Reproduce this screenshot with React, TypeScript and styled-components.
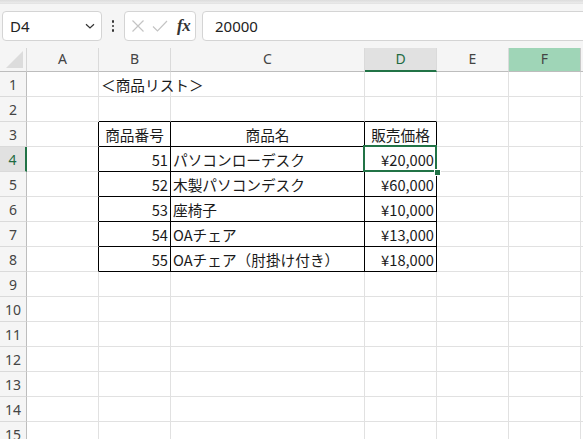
import React from 'react';
import styled, { createGlobalStyle } from 'styled-components';

const GlobalStyle = createGlobalStyle`
  html, body {
    margin: 0;
    padding: 0;
    background: #ffffff;
    overflow: hidden;
  }
  * {
    box-sizing: border-box;
  }
`;

const COLS = ['A', 'B', 'C', 'D', 'E', 'F', 'G'];
const WIDTHS = [72, 72, 194, 72, 72, 72, 72];
const ROW_HEAD = 27;
const ROW_COUNT = 15;

type CellData = { text: string; align?: 'left' | 'right' | 'center' };

const data: Record<string, CellData> = {
  B1: { text: '＜商品リスト＞' },
  B3: { text: '商品番号', align: 'center' },
  C3: { text: '商品名', align: 'center' },
  D3: { text: '販売価格', align: 'center' },
  B4: { text: '51', align: 'right' },
  C4: { text: 'パソコンローデスク' },
  D4: { text: '¥20,000', align: 'right' },
  B5: { text: '52', align: 'right' },
  C5: { text: '木製パソコンデスク' },
  D5: { text: '¥60,000', align: 'right' },
  B6: { text: '53', align: 'right' },
  C6: { text: '座椅子' },
  D6: { text: '¥10,000', align: 'right' },
  B7: { text: '54', align: 'right' },
  C7: { text: 'OAチェア' },
  D7: { text: '¥13,000', align: 'right' },
  B8: { text: '55', align: 'right' },
  C8: { text: 'OAチェア（肘掛け付き）' },
  D8: { text: '¥18,000', align: 'right' },
};

const Page = styled.div`
  width: 583px;
  height: 439px;
  display: flex;
  flex-direction: column;
  background: #f5f5f5;
  overflow: hidden;
`;

const RibbonEdge = styled.div`
  flex-shrink: 0;
  height: 4px;
  background: linear-gradient(#dcdcdc, #ebebeb);
  border-bottom: 1px solid #e4e4e4;
`;

const FormulaBar = styled.div`
  flex-shrink: 0;
  height: 44px;
  display: flex;
  align-items: flex-start;
  padding: 7px 0 0 2px;
  background: #f5f5f5;
`;

const NameBox = styled.div`
  width: 100px;
  height: 30px;
  display: flex;
  align-items: center;
  justify-content: space-between;
  padding: 0 5px 0 7px;
  background: #ffffff;
  border: 1px solid #d4d4d4;
  border-radius: 4px;
  font-family: 'Noto Sans', 'Open Sans', sans-serif;
  font-size: 15px;
  color: #222;
`;

const Dots = styled.div`
  width: 22px;
  height: 30px;
  display: flex;
  flex-direction: column;
  align-items: center;
  justify-content: center;
  gap: 2px;

  span {
    width: 2.5px;
    height: 2.5px;
    border-radius: 50%;
    background: #333;
  }
`;

const FxBox = styled.div`
  width: 72px;
  height: 30px;
  display: flex;
  align-items: center;
  padding: 0 4px 0 6px;
  gap: 7px;
  background: #ffffff;
  border: 1px solid #d4d4d4;
  border-radius: 4px;
`;

const FxLabel = styled.span`
  font-family: 'Liberation Serif', 'DejaVu Serif', serif;
  font-style: italic;
  font-weight: bold;
  font-size: 17px;
  color: #333;
  margin-left: 2px;
  letter-spacing: -0.5px;
`;

const FormulaInput = styled.div`
  flex: 1;
  height: 30px;
  margin-left: 6px;
  margin-right: -10px;
  display: flex;
  align-items: center;
  padding-left: 12px;
  background: #ffffff;
  border: 1px solid #d4d4d4;
  border-radius: 4px;
  font-family: 'Noto Sans', 'Open Sans', sans-serif;
  font-size: 15px;
  color: #222;
`;

const Sheet = styled.div`
  flex-shrink: 0;
  display: grid;
  grid-template-columns: ${ROW_HEAD}px ${WIDTHS.map((w) => `${w}px`).join(' ')};
  grid-template-rows: 24px repeat(${ROW_COUNT}, 25px);
  background: #ffffff;
  width: max-content;
`;

const Corner = styled.div`
  background: #f5f5f5;
  border-right: 1px solid #d6d6d6;
  border-bottom: 1px solid #bdbdbd;
  position: relative;
  overflow: hidden;

  &::after {
    content: '';
    position: absolute;
    right: 3px;
    bottom: 3px;
    width: 0;
    height: 0;
    border-left: 17px solid transparent;
    border-bottom: 17px solid #dcdcdc;
  }
`;

const ColHead = styled.div<{ $state?: 'selected' | 'hover' }>`
  display: flex;
  align-items: center;
  justify-content: center;
  font-family: 'Noto Sans', 'Open Sans', sans-serif;
  font-size: 14px;
  padding-bottom: 2px;
  color: ${(p) => (p.$state === 'selected' ? '#1e6b41' : '#444')};
  background: ${(p) =>
    p.$state === 'selected' ? '#e1e1e1' : p.$state === 'hover' ? '#9fd5b7' : '#f5f5f5'};
  border-right: 1px solid ${(p) => (p.$state === 'hover' ? '#c9c9c9' : '#dadada')};
  border-bottom: ${(p) =>
    p.$state === 'selected' ? '2px solid #217346' : '1px solid #bdbdbd'};
`;

const RowHead = styled.div<{ $selected?: boolean }>`
  display: flex;
  align-items: center;
  justify-content: center;
  font-family: 'Noto Sans', 'Open Sans', sans-serif;
  font-size: 14px;
  padding-top: 1px;
  color: ${(p) => (p.$selected ? '#1e6b41' : '#444')};
  background: ${(p) => (p.$selected ? '#e1e1e1' : '#f5f5f5')};
  border-right: ${(p) => (p.$selected ? '2px solid #217346' : '1px solid #bdbdbd')};
  border-bottom: 1px solid #dadada;
`;

const Cell = styled.div<{
  $align: 'left' | 'right' | 'center';
  $rightDark: boolean;
  $bottomDark: boolean;
  $active?: boolean;
}>`
  position: relative;
  display: flex;
  align-items: center;
  justify-content: ${(p) =>
    p.$align === 'right' ? 'flex-end' : p.$align === 'center' ? 'center' : 'flex-start'};
  padding: 0 2px 0 2px;
  white-space: nowrap;
  font-family: 'Noto Sans CJK JP', 'Noto Sans', sans-serif;
  font-size: 14.67px;
  color: #1a1a1a;
  border-right: 1px solid ${(p) => (p.$rightDark ? '#000' : '#e1e1e1')};
  border-bottom: 1px solid ${(p) => (p.$bottomDark ? '#000' : '#e1e1e1')};
  overflow: visible;
  z-index: ${(p) => (p.$active ? 2 : p.$align === 'left' ? 1 : 0)};

  &::after {
    content: '';
    display: ${(p) => (p.$active ? 'block' : 'none')};
    position: absolute;
    left: -2px;
    top: -2px;
    right: -1px;
    bottom: -1px;
    border: 2px solid #217346;
    pointer-events: none;
  }
`;

const CellText = styled.span`
  position: relative;
`;

const FillHandle = styled.div`
  position: absolute;
  right: -5px;
  bottom: -5px;
  width: 7px;
  height: 7px;
  background: #217346;
  border: 1px solid #ffffff;
  z-index: 3;
`;

const inTable = (r: number, c: number) => r >= 3 && r <= 8 && c >= 1 && c <= 3;

const ChevronIcon = () => (
  <svg width="12" height="12" viewBox="0 0 12 12">
    <path d="M2 4.2 L6 8 L10 4.2" fill="none" stroke="#333" strokeWidth="1.2" />
  </svg>
);

const CrossIcon = () => (
  <svg width="14" height="14" viewBox="0 0 14 14">
    <path d="M1.5 1.5 L12.5 12.5 M12.5 1.5 L1.5 12.5" fill="none" stroke="#c4c4c4" strokeWidth="1.2" />
  </svg>
);

const CheckIcon = () => (
  <svg width="16" height="14" viewBox="0 0 16 14">
    <path d="M1 7.5 L5.5 12 L15 2" fill="none" stroke="#c4c4c4" strokeWidth="1.2" />
  </svg>
);

export default function App() {
  const rows = Array.from({ length: ROW_COUNT }, (_, i) => i + 1);
  return (
    <>
      <GlobalStyle />
      <Page>
        <RibbonEdge />
        <FormulaBar>
          <NameBox>
            <span>D4</span>
            <ChevronIcon />
          </NameBox>
          <Dots>
            <span />
            <span />
            <span />
          </Dots>
          <FxBox>
            <CrossIcon />
            <CheckIcon />
            <FxLabel>fx</FxLabel>
          </FxBox>
          <FormulaInput>20000</FormulaInput>
        </FormulaBar>
        <Sheet>
          <Corner />
          {COLS.map((c) => (
            <ColHead key={c} $state={c === 'D' ? 'selected' : c === 'F' ? 'hover' : undefined}>
              {c === 'G' ? '' : c}
            </ColHead>
          ))}
          {rows.map((r) => (
            <React.Fragment key={r}>
              <RowHead $selected={r === 4}>{r}</RowHead>
              {COLS.map((c, ci) => {
                const d = data[`${c}${r}`];
                const rightDark = inTable(r, ci) || (ci === 0 && r >= 3 && r <= 8);
                const bottomDark = inTable(r, ci) || (r === 2 && ci >= 1 && ci <= 3);
                const active = c === 'D' && r === 4;
                return (
                  <Cell
                    key={c}
                    $align={d?.align ?? 'left'}
                    $rightDark={rightDark}
                    $bottomDark={bottomDark}
                    $active={active}
                  >
                    {d && <CellText>{d.text}</CellText>}
                    {active && <FillHandle />}
                  </Cell>
                );
              })}
            </React.Fragment>
          ))}
        </Sheet>
      </Page>
    </>
  );
}
